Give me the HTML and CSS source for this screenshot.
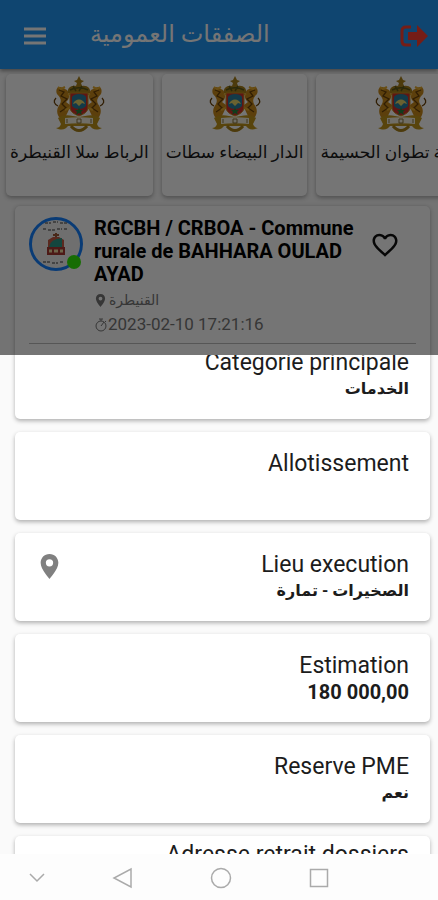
FILE: index.html
```html
<!DOCTYPE html>
<html lang="fr">
<head>
<meta charset="utf-8">
<meta name="viewport" content="width=device-width, initial-scale=1">
<title>الصفقات العمومية</title>
<link rel="stylesheet" href="styles.css">
</head>
<body>
<svg class="defs" aria-hidden="true">
  <symbol id="emblem" viewBox="0 0 52 56">
    <g id="lion">
      <path d="M10 12C5 9 2 13 4 18c3 3 5 6 3 10-3 4-4 8-1 13l6 2c1-5 5-9 5-14l-4-3c4-3 4-8 1-12z" fill="#c98a1c"/>
      <path d="M6 14l5 2-3 4 6 3-5 5 4 4-6 4M3 22c-3 3-2 6 2 8" fill="none" stroke="#6b4208" stroke-width="1.3"/>
      <path d="M5 11l3 2 4-2M15 19l5-3M12 34l7-3" fill="none" stroke="#e3ab2e" stroke-width="2"/>
    </g>
    <use href="#lion" transform="matrix(-1 0 0 1 52 0)"/>
    <path d="M26 0l2 4 3 1-3 2 1 3c5-1 9 2 8 7H15c-1-5 3-8 8-7l1-3-3-2 3-1z" fill="#a8801b"/>
    <path d="M17 14c6-3 12-3 18 0M20 10l3 5m6-5-3 5" fill="none" stroke="#5e5a16" stroke-width="1.5"/>
    <path d="M17 17h18v14c0 5-4 7-9 9-5-2-9-4-9-9z" fill="#d0302b" stroke="#c9921d"/>
    <path d="M19 21c2-4 12-4 14 0v9c-3 4-11 4-14 0z" fill="#2b7f9e"/>
    <path d="M20 28c2-6 10-6 12 0l-3-1-3 3-3-3z" fill="#e8d56a"/>
    <path d="M26 31l1 3h3l-2 2 1 3-3-2-3 2 1-3-2-2h3z" fill="#28823d"/>
    <path d="M5 42c7-5 14-2 21-1 7-1 14-4 21 1l-3 6c1 3 3 4 5 4-6 3-10 1-12-2-7 0-15 0-22 0-2 3-6 5-12 2 2 0 4-1 5-4z" fill="#c0951c"/>
    <path d="M12 42c9-1 19-1 28 0v6c-9-1-19-1-28 0z" fill="#f4f0e0"/>
    <path d="M14 43v4m24-4v4M24 43h4v4h-4z" fill="none" stroke="#8b7436"/>
    <path d="M18 50c5 6 11 6 16 0" fill="none" stroke="#a8801b" stroke-width="3"/>
  </symbol>
  <symbol id="pin" viewBox="0 0 24 24">
    <path d="M12 0C7 0 3.500 3.800 3.500 8.500 3.500 15 12 24 12 24s8.500-9 8.500-15.500C20.500 3.800 17 0 12 0zm0 12a3.500 3.500 0 1 1 0-7 3.500 3.500 0 0 1 0 7z" fill="currentColor"/>
  </symbol>
</svg>

<div class="screen">
  <section class="page">
    <header class="appbar">
      <button class="icon-button" type="button" aria-label="Menu">
        <svg width="24" height="18" viewBox="0 0 24 18"><path d="M1 2h22M1 9h22M1 16h22" stroke="#fff" stroke-width="3"/></svg>
      </button>
      <h1 class="appbar-title" dir="rtl">الصفقات العمومية</h1>
      <button class="icon-button logout" type="button" aria-label="Quitter">
        <svg width="30" height="24" viewBox="0 0 30 24"><path d="M12 3H7Q3 3 3 7v10q0 4 4 4h5" fill="none" stroke="#ff4030" stroke-width="3"/><path d="M9 8h9V1l11 11-11 11v-7H9z" fill="#ff4030"/></svg>
      </button>
    </header>

    <nav class="regions">
      <a class="region" href="#rabat"><svg class="region-emblem"><use href="#emblem"/></svg><span dir="rtl">الرباط سلا القنيطرة</span></a>
      <a class="region" href="#casa"><svg class="region-emblem"><use href="#emblem"/></svg><span dir="rtl">الدار البيضاء سطات</span></a>
      <a class="region wide" href="#tanger"><svg class="region-emblem"><use href="#emblem"/></svg><span dir="rtl">طنجة تطوان الحسيمة</span></a>
    </nav>

    <article class="tender">
      <div class="tender-head">
        <div class="avatar">
          <svg width="54" height="54" viewBox="0 0 54 54">
            <circle cx="27" cy="27" r="25.500" fill="#f2f2f2" stroke="#1580ff" stroke-width="3"/>
            <path d="M16 6h6m2-1h5m2 1h7M14 12h4m1 1h7m2-1h5m2 0h4M14 45h7m2 1h6m2-1h4" stroke="#777" stroke-width="1.500" stroke-dasharray="3 1" fill="none"/>
            <path d="M27 16v6M24 18h6" stroke="#a05a3a" stroke-width="2"/>
            <path d="M19 30v-7l5-3h6l5 3v7z" fill="#c55a45"/>
            <path d="M20 30q1-8 13-9v9z" fill="#2c9a88"/>
            <path d="M18 30h18v8H18z" fill="#a83a32"/>
            <path d="M20 34h3m2 0h4m2 0h3" stroke="#f0d9a0" stroke-width="3"/>
          </svg>
          <span class="status"></span>
        </div>
        <div class="tender-info">
          <h2 class="tender-title">RGCBH / CRBOA - Commune rurale de BAHHARA OULAD AYAD</h2>
          <p class="meta place"><svg width="13" height="13"><use href="#pin"/></svg><span dir="rtl">القنيطرة</span></p>
          <p class="meta date"><svg width="14" height="14" viewBox="0 0 14 14" fill="none" stroke="currentColor"><circle cx="7" cy="8" r="5"/><path d="M5 1h4M7 1v2M7 8l3-4M11 3l1 1"/></svg><time>2023-02-10 17:21:16</time></p>
        </div>
        <button class="icon-button like" type="button" aria-label="Favori">
          <svg width="30" height="30" viewBox="0 0 24 24"><path d="M16.500 3c-1.740 0-3.410.81-4.500 2.090C10.910 3.810 9.240 3 7.500 3 4.420 3 2 5.420 2 8.500c0 3.780 3.400 6.860 8.550 11.540L12 21.350l1.450-1.320C18.600 15.360 22 12.280 22 8.500 22 5.420 19.580 3 16.500 3zm-4.400 15.550-.1.100-.1-.1C7.140 14.240 4 11.390 4 8.500 4 6.500 5.500 5 7.500 5c1.540 0 3.040.99 3.570 2.360h1.870C13.460 5.990 14.960 5 16.500 5c2 0 3.500 1.500 3.500 3.500 0 2.890-3.140 5.740-7.900 10.050z" fill="#111"/></svg>
        </button>
      </div>
      <hr class="rule">
    </article>
    <div class="scrim"></div>
  </section>

  <main class="sheet">
    <section class="card first"><h3>Categorie principale</h3><p dir="rtl">الخدمات</p></section>
    <section class="card"><h3>Allotissement</h3></section>
    <section class="card"><svg class="card-pin"><use href="#pin"/></svg><h3>Lieu execution</h3><p dir="rtl">الصخيرات - تمارة</p></section>
    <section class="card"><h3>Estimation</h3><p class="amount">180 000,00</p></section>
    <section class="card"><h3>Reserve PME</h3><p dir="rtl">نعم</p></section>
    <section class="card compact"><h3>Adresse retrait dossiers</h3></section>
  </main>

  <footer class="navbar">
    <button class="icon-button" type="button" aria-label="Masquer"><svg width="18" height="12" viewBox="0 0 18 12"><path d="M2 2l7 7 7-7"/></svg></button>
    <button class="icon-button" type="button" aria-label="Retour"><svg width="22" height="22" viewBox="0 0 22 22"><path d="M19 2v18L2 11z"/></svg></button>
    <button class="icon-button" type="button" aria-label="Accueil"><svg width="22" height="22" viewBox="0 0 22 22"><circle cx="11" cy="11" r="9.500"/></svg></button>
    <button class="icon-button" type="button" aria-label="Applications"><svg width="22" height="22" viewBox="0 0 22 22"><path d="M2.500 2.500h17v17h-17z"/></svg></button>
  </footer>
</div>
</body>
</html>
```
FILE: styles.css
```css
* { box-sizing: border-box; }
body, h1, h2, h3, p { margin: 0; }
body {
  background: #fafafa;
  color: #1c1c1c;
  font-family: Roboto, "DejaVu Sans", sans-serif;
}
.defs { position: absolute; width: 0; height: 0; }
.screen {
  display: flex;
  flex-direction: column;
  height: 100vh;
  overflow: hidden;
}
.icon-button {
  display: flex;
  padding: 0;
  border: 0;
  background: none;
}

/* Dimmed page behind the sheet */
.page {
  position: relative;
  flex: none;
  overflow: hidden;
}
.scrim {
  position: absolute;
  inset: 0;
  background: rgba(0, 0, 0, 0.54);
}
.appbar {
  display: flex;
  align-items: center;
  height: 69px;
  padding: 2px 9px 0 23px;
  background: #2196f3;
  box-shadow: 0 2px 4px rgba(0, 0, 0, 0.4);
}
.appbar-title {
  margin-left: 43px;
  padding-bottom: 4px;
  color: #fff;
  font-size: 24px;
  font-weight: 400;
  line-height: 32px;
}
.logout { margin-left: auto; }

.regions {
  display: flex;
  gap: 9px;
  padding: 5px 0 10px 6px;
}
.region {
  display: flex;
  flex: none;
  flex-direction: column;
  align-items: center;
  height: 122px;
  padding: 2px 4px 0;
  border-radius: 5px;
  background: #fff;
  box-shadow: 0 2px 4px rgba(0, 0, 0, 0.3);
  color: #1c1c1c;
  font-size: 17px;
  line-height: 24px;
  text-decoration: none;
  white-space: nowrap;
}
.wide { width: 170px; }
.wide span { align-self: flex-start; }
.region-emblem {
  width: 52px;
  height: 56px;
  margin-bottom: 8px;
}

.tender {
  margin: 0 8px 0 15px;
  padding: 11px 14px;
  border-radius: 5px 5px 0 0;
  background: #fff;
  box-shadow: 0 1px 4px rgba(0, 0, 0, 0.3);
}
.tender-head { display: flex; }
.avatar {
  position: relative;
  flex: none;
  width: 54px;
  height: 54px;
  margin-right: 11px;
}
.avatar svg { display: block; }
.status {
  position: absolute;
  right: 2px;
  bottom: 2px;
  width: 14px;
  height: 14px;
  border-radius: 50%;
  background: #33ee0a;
}
.tender-info { flex: 1; }
.tender-title {
  color: #000;
  font-size: 20px;
  font-weight: 700;
  line-height: 23px;
}
.meta {
  display: flex;
  align-items: center;
  color: #777;
}
.place {
  gap: 2px;
  margin-top: 2px;
  font-size: 14px;
  line-height: 24px;
}
.date {
  font-size: 17px;
  line-height: 25px;
}
.like {
  align-self: flex-start;
  margin: 13px 16px 0 0;
}
.rule {
  height: 1px;
  margin: 6px 0 0;
  border: 0;
  background: #bbb;
}

/* Details sheet */
.sheet {
  display: flex;
  flex: 1;
  flex-direction: column;
  gap: 13px;
  min-height: 0;
  padding: 0 8px 0 15px;
  overflow: hidden;
}
.card {
  position: relative;
  flex: none;
  height: 88px;
  padding: 18px 21px 0;
  border-radius: 5px;
  background: #fff;
  box-shadow: 0 2px 4px rgba(0, 0, 0, 0.3);
  text-align: right;
}
.first { margin-top: -24px; }
.compact { padding-top: 5px; }
.card h3 {
  font-size: 23px;
  font-weight: 400;
  line-height: 27px;
}
.card p {
  font-size: 16px;
  font-weight: 700;
  line-height: 26px;
  text-align: right;
}
.card .amount { font-size: 20px; }
.card-pin {
  position: absolute;
  top: 21px;
  left: 22px;
  width: 25px;
  height: 25px;
  color: #808080;
}

.navbar {
  display: grid;
  flex: none;
  grid-template-columns: 74fr 98fr 98fr 98fr 70fr;
  align-items: center;
  justify-items: center;
  height: 46px;
  padding-top: 2px;
  background: #fdfdfd;
}
.navbar svg {
  fill: none;
  stroke: #aaa;
  stroke-width: 1.5px;
}
```
